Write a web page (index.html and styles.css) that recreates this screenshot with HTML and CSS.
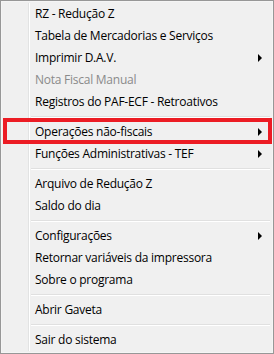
FILE: index.html
```html
<!DOCTYPE html>
<html lang="pt">
<head>
  <meta charset="UTF-8">
  <title>Menu</title>
  <link rel="stylesheet" href="styles.css">
</head>
<body>

  <div class="menu">
    <div class="item">RZ - Redução Z</div>
    <div class="item">Tabela de Mercadorias e Serviços</div>
    <div class="item sub">Imprimir D.A.V.</div>
    <div class="item disabled">Nota Fiscal Manual</div>
    <div class="item">Registros do PAF-ECF - Retroativos</div>
    <div class="sep"></div>
    <div class="item sub marked">Operações não-fiscais</div>
    <div class="item sub">Funções Administrativas - TEF</div>
    <div class="sep"></div>
    <div class="item">Arquivo de Redução Z</div>
    <div class="item">Saldo do dia</div>
    <div class="sep"></div>
    <div class="item sub">Configurações</div>
    <div class="item">Retornar variáveis da impressora</div>
    <div class="item">Sobre o programa</div>
    <div class="sep"></div>
    <div class="item">Abrir Gaveta</div>
    <div class="sep"></div>
    <div class="item">Sair do sistema</div>
  </div>

</body>
</html>
```

FILE: styles.css
```css
body {
  margin: 0;
  font-family: 'Open Sans', sans-serif;
  font-size: 12px;
  letter-spacing: -0.25px;
  color: #000;
}

.menu {
  width: 274px;
  height: 354px;
  box-sizing: border-box;
  border: 1px solid #979797;
  background: #f0f0f0;
  box-shadow: inset 0 0 0 1px #f5f5f5;
  padding: 2px 2px;
  position: relative;
}

/* left gutter lines */
.menu::before {
  content: "";
  position: absolute;
  top: 2px;
  bottom: 2px;
  left: 27px;
  width: 1px;
  background: #e2e3e3;
  border-right: 1px solid #ffffff;
}

.item {
  height: 22px;
  line-height: 22px;
  padding-left: 32px;
  white-space: nowrap;
  position: relative;
}

.item.disabled {
  color: #8a8a8a;
}

.item.sub::after {
  content: "";
  position: absolute;
  right: 9px;
  top: 7px;
  border-left: 4px solid #000;
  border-top: 4px solid transparent;
  border-bottom: 4px solid transparent;
}

.item.marked::before {
  content: "";
  position: absolute;
  left: 0;
  right: -1px;
  top: -3px;
  bottom: -1px;
  border: 4px solid #ec1c24;
}

.sep {
  height: 8px;
  margin-left: 27px;
  position: relative;
}

.sep::before {
  content: "";
  position: absolute;
  left: 1px;
  right: 1px;
  top: 3px;
  height: 1px;
  background: #e0e0e0;
  border-bottom: 1px solid #ffffff;
}
```
